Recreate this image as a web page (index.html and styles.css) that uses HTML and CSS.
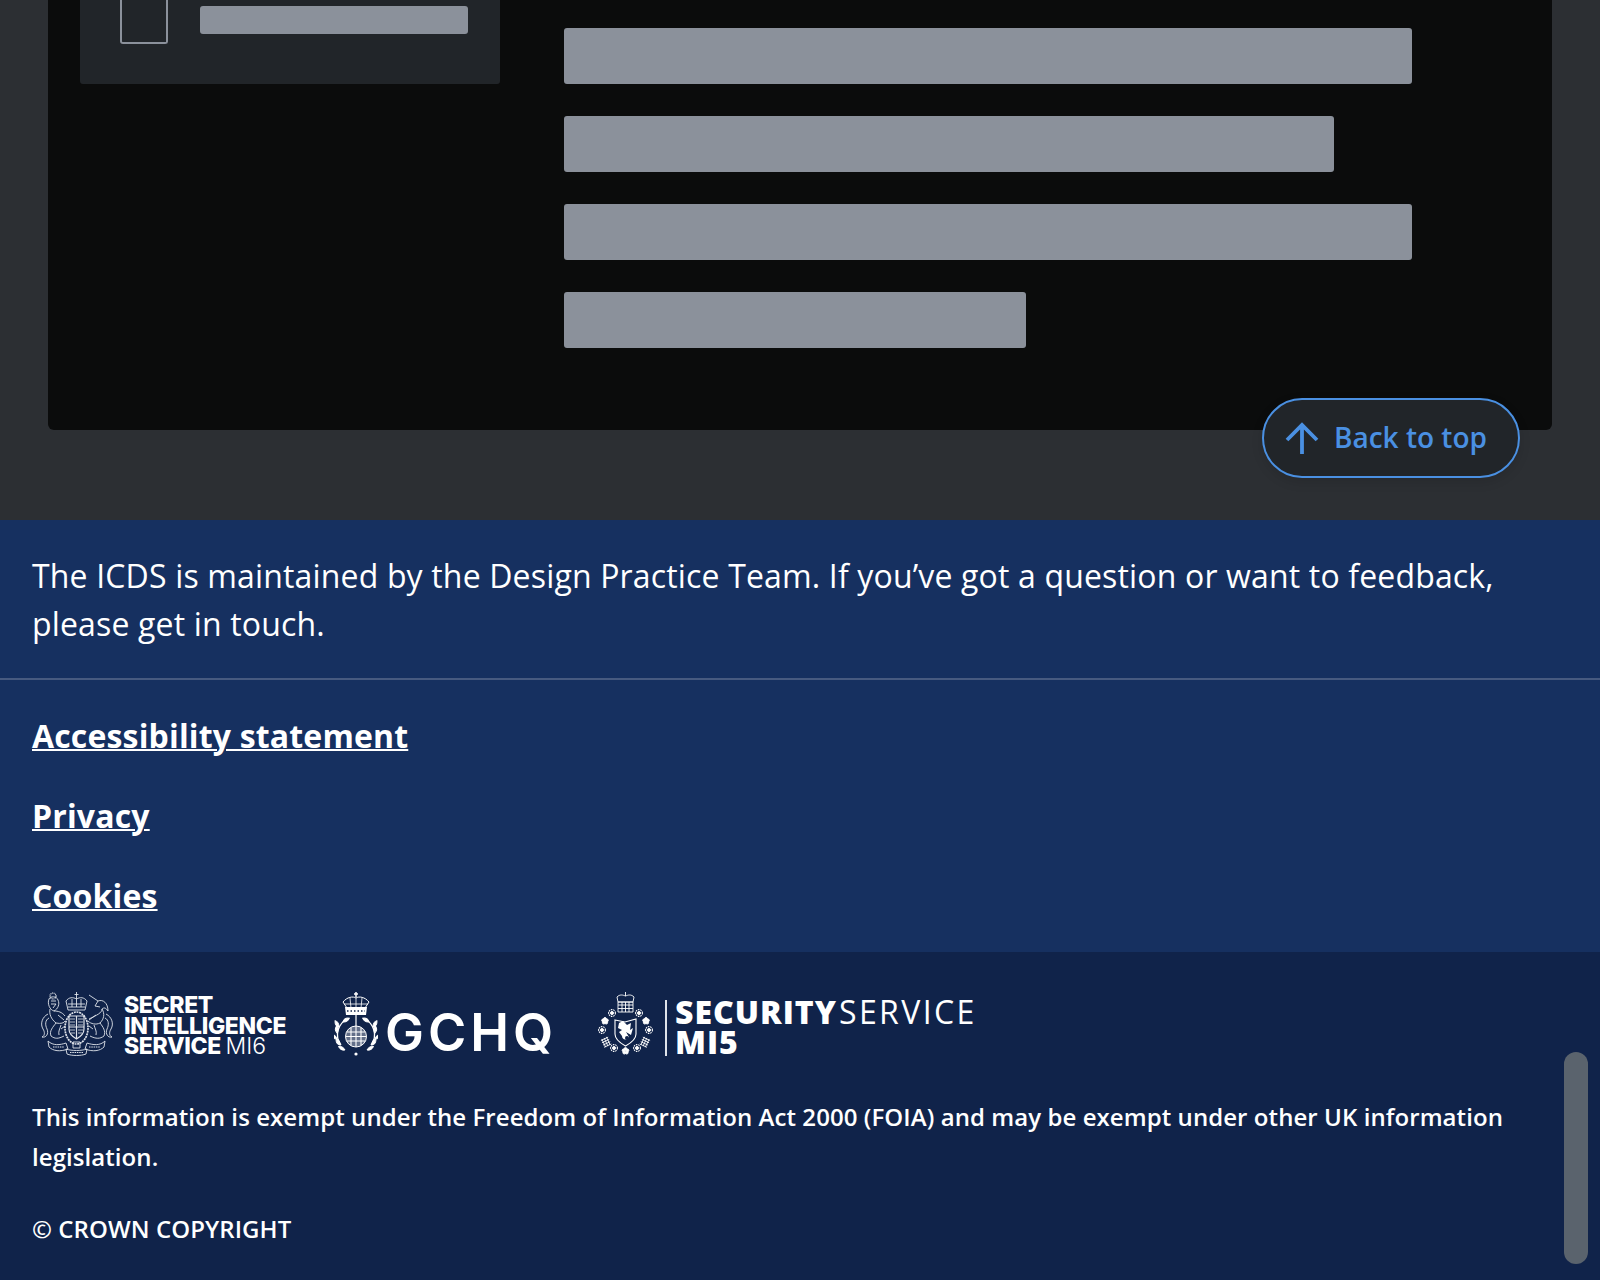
FILE: index.html
```html
<!DOCTYPE html>
<html lang="en">
<head>
  <meta charset="UTF-8" />
  <title>ICDS</title>
  <link rel="stylesheet" href="styles.css">
</head>
<body>

  <svg class="defs" width="0" height="0" aria-hidden="true">
    <defs>
      <g id="rose">
        <circle r="3.4" fill="none" stroke="#fff" stroke-width="1.1" stroke-dasharray="1.6 .8" />
        <circle r="1.5" fill="#fff" />
      </g>
      <g id="flower">
        <circle cx="0" cy="-2" r="1.4" fill="#fff" />
        <circle cx="1.9" cy="-.6" r="1.4" fill="#fff" />
        <circle cx="1.2" cy="1.6" r="1.4" fill="#fff" />
        <circle cx="-1.2" cy="1.6" r="1.4" fill="#fff" />
        <circle cx="-1.9" cy="-.6" r="1.4" fill="#fff" />
      </g>
      <g id="grille" fill="none" stroke="#fff" stroke-width=".8">
        <path d="M-4-3.5H4M-4-1H4M-4 1.5H4M-4 4H4M-2.5-4.5V4.500M0-4.5V4.500M2.5-4.5V4.500" />
      </g>
      <path id="leaf" d="M0 0C2.400-1.200 4-3.600 3.600-6.500 1-5.500-.7-2.900 0 0Z" fill="#fff" />
    </defs>
  </svg>

  <main class="page">
    <div class="panel">
      <aside class="sidecard">
        <div class="siderow">
          <span class="checkbox"></span>
          <span class="sidebar-line"></span>
        </div>
      </aside>
      <div class="lines">
        <div class="line line-full"></div>
        <div class="line line-long"></div>
        <div class="line line-full"></div>
        <div class="line line-short"></div>
      </div>
    </div>
    <a class="back-to-top" href="#">
      <svg width="34" height="34" viewBox="0 0 34 34" fill="none" stroke="#4a90e2" stroke-width="3.8">
        <path d="M17 33V4M2 19 17 4 32 19" />
      </svg>
      <span>Back to top</span>
    </a>
  </main>

  <footer class="footer">
    <div class="footer-intro">
      <p>The ICDS is maintained by the Design Practice Team. If you’ve got a question or want to feedback, please get in touch.</p>
    </div>
    <nav class="footer-links">
      <a href="#">Accessibility statement</a>
      <a href="#">Privacy</a>
      <a href="#">Cookies</a>
    </nav>
    <div class="footer-legal">
      <div class="logos">
        <div class="logo logo-sis">
          <svg class="crest" width="74" height="64" viewBox="0 0 74 64" fill="none" stroke="#dfe3ea" stroke-width=".9">
            <!-- crown -->
            <path d="M28 18 26 9C29 5 33 5 36.500 7 40 5 44 5 47 9L45 18ZM28 15H45M28 12H45M32 7V15M36.500 7V15M41 7V15M36.500 0V7M34.500 2.500H38.500" />
            <!-- shield and garter -->
            <ellipse cx="36.500" cy="36" rx="11.500" ry="16" stroke-width="1.700" stroke-dasharray="2 .7" />
            <path d="M29 24H44V37C44 42 40 45 36.500 47 33 45 29 42 29 37ZM36.500 24V47M29 35H44" stroke-width="1.200" />
            <path d="M30 27H35M38 27H43M30 30H35M38 30H43M30 33H35M38 33H43M30 38H35M38 38H43M31 41H35M38 41H42" stroke-width=".8" />
            <!-- lion -->
            <path d="M9 7C10 4 17 4 18 8 20 12 18 17 14 19 10 18 7 12 9 7ZM11 9 16 9M11 12 16 12 13 16" />
            <path d="M14 19C18 19 22 20 25 24M10 17C9 22 11 27 16 31 21 32 24 31 25 29M16 31C13 35 9 39 11 44 15 47 18 47 24 44M21 33C20 37 18 39 19 43M25 34 21 37M18 23 24 28" />
            <path d="M8 22C2 25 0 32 3 37 5 40 5 44 2 45 6 46 9 42 7 37 5 33 5 28 9 26" />
            <circle cx="13" cy="4" r="3" stroke-dasharray="1 .6" stroke-width="1.200" />
            <!-- unicorn -->
            <path d="M49 3 58 9C63 7 68 11 68 19 66 16 64 15 62 17 62 21 57 23 49 27M58 9 55 14 60 15" />
            <path d="M62 17C65 22 64 27 60 31 56 33 51 32 48 29M60 31C63 35 66 39 64 44 60 47 56 47 50 44M54 33C55 37 57 39 56 43M49 34 53 37M56 23 49 28" />
            <path d="M66 22C72 25 74 32 71 37 69 40 69 44 72 45 68 46 65 42 67 37 69 33 69 28 65 26" />
            <!-- motto -->
            <path d="M8 49C13 54 20 53 26 51L28 57C20 60 13 59 9 55ZM65 49C60 54 53 53 47 51L45 57C53 60 60 59 64 55ZM26 57C32 59 41 59 47 57L46 62C41 64 32 64 27 62ZM33 50H40V56H33Z" />
            <path d="M13 55H24M49 55H60M30 60.500H43" stroke-width="1.200" stroke-dasharray="1.500 .8" />
          </svg>
          <div class="sis-name">SECRET<br>INTELLIGENCE<br>SERVICE <span>MI6</span></div>
        </div>
        <div class="logo logo-gchq">
          <svg class="crest" width="44" height="64" viewBox="0 0 44 64" fill="none" stroke="#fff">
            <path d="M22 0V5M20 2H24" stroke-width="1.500" />
            <path d="M13 16 9 10C13 5 19 4 22 6 25 4 31 5 35 10L31 16" stroke-width="1" />
            <path d="M22 6V16M16 6 17 16M28 6 27 16M10 12H34" stroke-width=".8" />
            <path d="M11 15H33L32 23H12Z" fill="#fff" stroke="none" />
            <path d="M13 19H31" stroke="#10234a" stroke-width="1.500" stroke-dasharray="1.500 2" />
            <path d="M22 23V34" stroke-width="1.200" />
            <circle cx="22" cy="44.500" r="10.500" fill="#fff" fill-opacity=".35" stroke-width="1" />
            <path d="M12.500 40H31.500M11.500 44.500H32.500M12.500 49H31.500M17 35.500V53.500M22 34V55M27 35.500V53.500" stroke-width="1.100" />
            <path d="M13 27C4 32 0 44 7 53M31 27C40 32 44 44 37 53" stroke-width="1.300" />
            <g>
              <use href="#leaf" transform="translate(9 30) rotate(30)" />
              <use href="#leaf" transform="translate(5 35) rotate(-60)" />
              <use href="#leaf" transform="translate(3 41) rotate(-30)" />
              <use href="#leaf" transform="translate(3 47) rotate(-80)" />
              <use href="#leaf" transform="translate(6 53) rotate(-60)" />
              <use href="#leaf" transform="translate(11 58) rotate(-90)" />
              <use href="#leaf" transform="translate(35 30) scale(-1 1) rotate(30)" />
              <use href="#leaf" transform="translate(39 35) scale(-1 1) rotate(-60)" />
              <use href="#leaf" transform="translate(41 41) scale(-1 1) rotate(-30)" />
              <use href="#leaf" transform="translate(41 47) scale(-1 1) rotate(-80)" />
              <use href="#leaf" transform="translate(38 53) scale(-1 1) rotate(-60)" />
              <use href="#leaf" transform="translate(33 58) scale(-1 1) rotate(-90)" />
            </g>
            <circle cx="22" cy="62" r="1.600" fill="#fff" stroke="none" />
          </svg>
          <span class="gchq-name">GCHQ</span>
        </div>
        <div class="logo logo-mi5">
          <svg class="crest" width="56" height="64" viewBox="0 0 56 64" fill="none" stroke="#fff">
            <path d="M20 10 19 5C22 2 25 3 27.500 4 30 3 33 2 36 5L35 10ZM27.500 0V4" stroke-width=".9" />
            <path d="M20 10H35V20H20ZM20 13H35M20 16.500H35M24 10V20M27.500 10V20M31 10V20" stroke-width=".9" />
            <use href="#rose" x="14" y="21" />
            <use href="#rose" x="41" y="21" />
            <use href="#flower" x="7" y="29" />
            <use href="#flower" x="48" y="29" />
            <use href="#rose" x="4" y="38" />
            <use href="#rose" x="51" y="38" />
            <use href="#grille" transform="translate(8 50) rotate(-25)" />
            <use href="#grille" transform="translate(47 50) rotate(25)" />
            <use href="#rose" x="16" y="56" />
            <use href="#flower" x="27.500" y="59" />
            <use href="#rose" x="39" y="56" />
            <path d="M17 28 27 30 38 27V42C38 47 33 51 27.500 54 22 51 17 47 17 42Z" stroke-width="1.100" />
            <path d="M21 31 25 29 29 33 33 31 32 38 35 36 33 43 28 40 31 45C29 49 24 48 24 44L21 40 24 38 20 36Z" fill="#fff" stroke="none" />
            <circle cx="29" cy="46" r="2" fill="#10234a" stroke="none" />
          </svg>
          <span class="mi5-rule"></span>
          <div class="mi5-name"><b>SECURITY</b><span>SERVICE</span><br><b>MI5</b></div>
        </div>
      </div>
      <p class="legal-text">This information is exempt under the Freedom of Information Act 2000 (FOIA) and may be exempt under other UK information legislation.</p>
      <p class="copyright">© CROWN COPYRIGHT</p>
    </div>
  </footer>

  <div class="scroll-thumb"></div>

</body>
</html>
```

FILE: styles.css
```css
* {
  margin: 0;
  padding: 0;
  box-sizing: border-box;
}

body {
  position: relative;
  height: 1280px;
  overflow: hidden;
  font-family: 'Open Sans', sans-serif;
  color: #fff;
  background: #10234a;
}

.defs {
  position: absolute;
}

.page {
  position: relative;
  height: 520px;
  padding: 0 48px;
  background: #2c2f33;
}

.panel {
  display: flex;
  height: 430px;
  padding: 0 32px;
  background: #0b0c0c;
  border-radius: 0 0 6px 6px;
}

.sidecard {
  width: 420px;
  height: 84px;
  background: #212529;
  border-radius: 0 0 3px 3px;
}

.siderow {
  display: flex;
  gap: 32px;
  padding-left: 40px;
}

.checkbox {
  width: 48px;
  height: 44px;
  border: 2px solid #8b919b;
  border-top: none;
  border-radius: 0 0 3px 3px;
}

.sidebar-line {
  width: 268px;
  height: 28px;
  margin-top: 6px;
  background: #8b919b;
  border-radius: 3px;
}

.lines {
  display: flex;
  flex-direction: column;
  gap: 32px;
  width: 848px;
  margin-left: 64px;
  padding-top: 28px;
}

.line {
  height: 56px;
  background: #8b919b;
  border-radius: 3px;
}

.line-long {
  width: 770px;
}

.line-short {
  width: 462px;
}

.back-to-top {
  position: absolute;
  top: 398px;
  left: 1262px;
  display: flex;
  align-items: center;
  gap: 15px;
  width: 258px;
  height: 80px;
  padding-left: 21px;
  font-size: 28px;
  font-weight: 600;
  color: #4a90e2;
  text-decoration: none;
  background: #212529;
  border: 2px solid #4a90e2;
  border-radius: 40px;
  box-shadow: 0 4px 12px rgba(0, 0, 0, 0.12);
}

.back-to-top span {
  padding-bottom: 2px;
}

.footer-intro {
  height: 160px;
  padding: 32px 32px 0;
  font-size: 32px;
  line-height: 48px;
  letter-spacing: 0.16px;
  background: #163060;
  border-bottom: 2px solid #475a80;
}

.footer-links {
  display: flex;
  flex-direction: column;
  align-items: flex-start;
  gap: 32px;
  height: 272px;
  padding: 32px 32px 0;
  background: #163060;
}

.footer-links a {
  font-size: 32px;
  line-height: 48px;
  font-weight: 700;
  letter-spacing: 0.16px;
  color: #fff;
  text-decoration-thickness: 2px;
}

.footer-legal {
  padding: 40px 32px 0;
}

.logos {
  display: flex;
  height: 64px;
}

.logo {
  display: flex;
  flex: none;
}

.logo-sis {
  width: 302px;
  padding-left: 8px;
}

.sis-name {
  margin: 3px 0 0 10px;
  font-family: Inter, sans-serif;
  font-size: 23px;
  line-height: 20.5px;
  font-weight: 800;
  letter-spacing: -0.35px;
}

.sis-name span {
  font-weight: 300;
  letter-spacing: 0;
}

.logo-gchq {
  width: 264px;
}

.gchq-name {
  margin: 9px 0 0 7px;
  font-family: Inter, sans-serif;
  font-size: 52px;
  line-height: 64px;
  font-weight: 600;
  letter-spacing: 4px;
}

.mi5-rule {
  width: 2px;
  height: 56px;
  margin: 8px 8px 0 11px;
  background: #dfe3ea;
}

.mi5-name {
  margin-top: 5px;
  font-family: 'Open Sans', sans-serif;
  font-size: 32px;
  line-height: 30px;
  font-weight: 400;
  letter-spacing: 1px;
}

.mi5-name span {
  margin-left: 2px;
  letter-spacing: 2.4px;
}

.mi5-name b {
  font-weight: 800;
}

.legal-text {
  margin-top: 41px;
  font-size: 24px;
  line-height: 40px;
  font-weight: 600;
  letter-spacing: 0.07px;
}

.copyright {
  margin-top: 32px;
  font-size: 24px;
  line-height: 40px;
  font-weight: 600;
  letter-spacing: 0.07px;
}

.scroll-thumb {
  position: absolute;
  top: 1052px;
  left: 1564px;
  width: 24px;
  height: 212px;
  background: #5a636d;
  border-radius: 12px;
}
```
